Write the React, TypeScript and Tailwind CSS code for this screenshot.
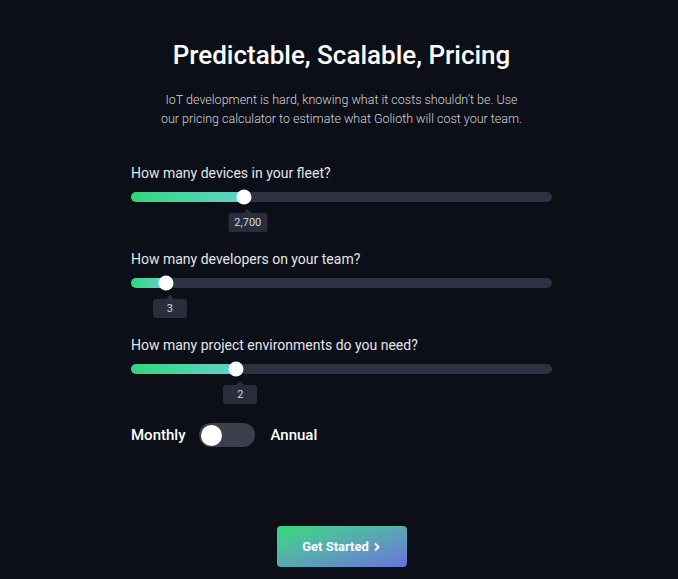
const sliders = [
  { label: "How many devices in your fleet?", value: "2,700", pct: 26.8 },
  { label: "How many developers on your team?", value: "3", pct: 8.3 },
  { label: "How many project environments do you need?", value: "2", pct: 25 },
];

function Slider({ label, value, pct }: { label: string; value: string; pct: number }) {
  return (
    <div className="flex flex-col">
      <div className="text-[14px] leading-5 text-[#e4e5ea]">{label}</div>
      <div className="relative mt-[9px] h-[10px] w-full rounded-full bg-[#2d3142]">
        <div
          className="absolute left-0 top-0 h-full rounded-full bg-gradient-to-r from-[#2fd67b] to-[#5fd2c7]"
          style={{ width: `${pct}%` }}
        />
        <div
          className="absolute top-1/2 h-[15px] w-[15px] -translate-x-1/2 -translate-y-1/2 rounded-full bg-white"
          style={{ left: `${pct}%` }}
        />
        <div
          className="absolute top-[17px] flex -translate-x-1/2 flex-col items-center"
          style={{ left: `calc(${pct}% + 4px)` }}
        >
          <div className="h-0 w-0 border-x-[4px] border-b-[4px] border-x-transparent border-b-[#292d3c]" />
          <div className="min-w-[34px] rounded-[3px] bg-[#292d3c] px-[6px] py-[2px] text-center text-[11px] leading-[15px] text-[#d5d7df]">
            {value}
          </div>
        </div>
      </div>
    </div>
  );
}

export default function App() {
  return (
    <div
      className="min-h-[579px] w-full bg-[#0c0f17] text-white"
      style={{ fontFamily: "Roboto, 'Noto Sans', sans-serif" }}
    >
      <div className="mx-auto flex w-[426px] flex-col pl-[5px] pt-[39px]">
        <h1 className="text-center text-[26px] font-medium leading-8 text-white">
          Predictable, Scalable, Pricing
        </h1>
        <p className="mt-[19px] text-center text-[12.5px] font-light leading-[19px] text-[#d2d3db]">
          IoT development is hard, knowing what it costs shouldn’t be. Use
          <br />
          our pricing calculator to estimate what Golioth will cost your team.
        </p>
        <div className="mt-[35px] flex flex-col gap-[47px]">
          {sliders.map((s) => (
            <Slider key={s.label} {...s} />
          ))}
        </div>
        <div className="mt-[49px] flex items-center">
          <span className="text-[15px] font-medium text-white">Monthly</span>
          <div className="ml-[14px] flex h-[24px] w-[56px] items-center rounded-full bg-[#3d3f4c] px-[2px]">
            <div className="h-[21px] w-[21px] rounded-full bg-white" />
          </div>
          <span className="ml-[15px] text-[15px] font-medium text-white">Annual</span>
        </div>
        <div className="mt-[79px] flex justify-center">
          <button className="flex h-[41px] w-[130px] items-center justify-center gap-1 rounded-[4px] bg-gradient-to-br from-[#33d97a] to-[#6a6fd9] text-[13px] font-bold text-white">
            Get Started
            <svg width="8" height="10" viewBox="0 0 8 10" fill="none">
              <path d="M2.5 2 5.5 5 2.5 8" stroke="white" strokeWidth="1.8" strokeLinecap="round" strokeLinejoin="round" />
            </svg>
          </button>
        </div>
      </div>
    </div>
  );
}
